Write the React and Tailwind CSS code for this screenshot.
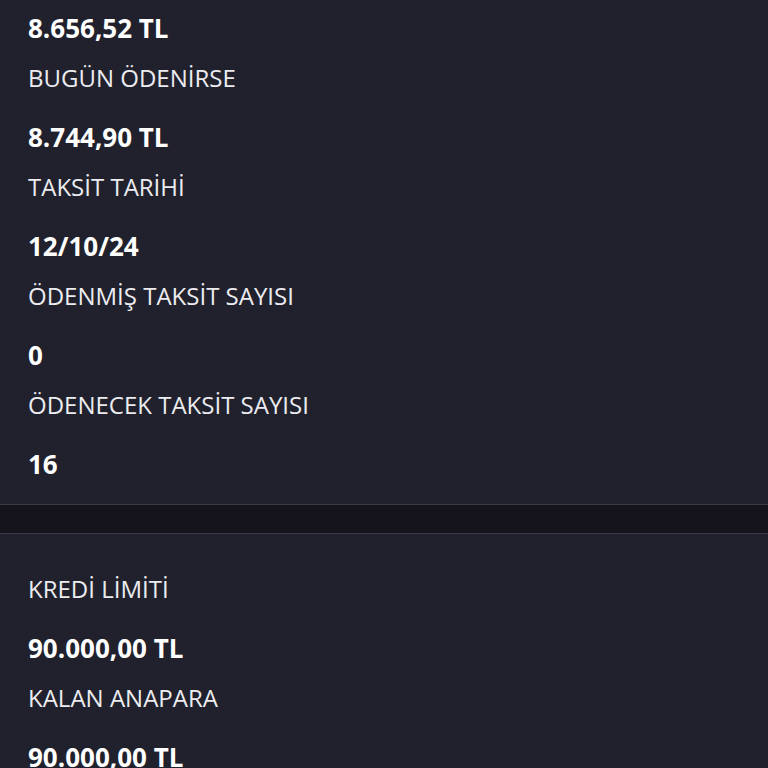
export default function App() {
  const first = [
    ["BUGÜN ÖDENİRSE", "8.744,90 TL"],
    ["TAKSİT TARİHİ", "12/10/24"],
    ["ÖDENMİŞ TAKSİT SAYISI", "0"],
    ["ÖDENECEK TAKSİT SAYISI", "16"],
  ];
  const second = [
    ["KREDİ LİMİTİ", "90.000,00 TL"],
    ["KALAN ANAPARA", "90.000,00 TL"],
  ];
  const Label = ({ children }) => (
    <div className="text-[24px] leading-[36px] text-[#ececf0] font-normal">{children}</div>
  );
  const Value = ({ children }) => (
    <div className="text-[26px] leading-[36px] text-white font-bold">{children}</div>
  );
  return (
    <div
      className="w-[768px] h-[768px] overflow-hidden bg-[#20212d]"
      style={{ fontFamily: '"Open Sans", "Noto Sans", sans-serif' }}
    >
      <div className="flex flex-col gap-[14px] px-[28px] pt-[10px] pb-[22px] border-b border-[#3a3b47] bg-[#20212d]">
        <Value>8.656,52 TL</Value>
        {first.map(([l, v]) => (
          <div key={l} className="flex flex-col gap-[23px]">
            <Label>{l}</Label>
            <Value>{v}</Value>
          </div>
        ))}
      </div>
      <div className="h-[29px] bg-[#15141d] border-b border-[#3a3b47]" />
      <div className="flex flex-col gap-[14px] px-[28px] pt-[37px] bg-[#20212d]">
        {second.map(([l, v], i) => (
          <div key={i} className="flex flex-col gap-[23px]">
            <Label>{l}</Label>
            <Value>{v}</Value>
          </div>
        ))}
      </div>
    </div>
  );
}
